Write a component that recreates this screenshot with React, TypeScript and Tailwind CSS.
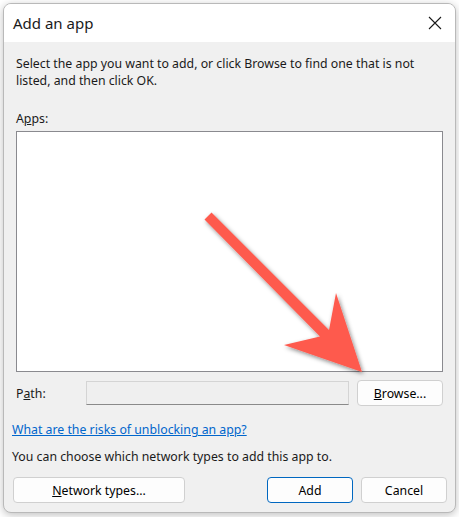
import React from 'react';

const font = { fontFamily: '"Noto Sans", "Open Sans", sans-serif' };

const Btn = ({ children, className = '' }: { children: React.ReactNode; className?: string }) => (
  <button
    className={`h-[26px] rounded-[4px] border bg-[#fdfdfd] text-[12.3px] text-black ${className}`}
  >
    {children}
  </button>
);

const Arrow = () => (
  <svg className="absolute left-0 top-0 pointer-events-none" width="459" height="517" viewBox="0 0 459 517">
    <defs>
      <filter id="sh" x="-20%" y="-20%" width="140%" height="140%">
        <feDropShadow dx="1.5" dy="2" stdDeviation="2" floodColor="#000" floodOpacity="0.45" />
      </filter>
    </defs>
    <polygon
      points="211.5,212.5 329,330 336,293 362,372 284,345 320,336.5 204.5,219.5"
      fill="#fe5a4e"
      filter="url(#sh)"
    />
  </svg>
);

export default function App() {
  return (
    <div className="relative w-[459px] h-[517px] bg-white overflow-hidden" style={font}>
      <div className="p-[3px]">
        <div className="w-[453px] h-[510px] rounded-[8px] border border-[#b9b9b9] bg-[#f0f0f0] overflow-hidden shadow-[0_2px_8px_rgba(0,0,0,0.25)] flex flex-col">
          {/* title bar */}
          <div className="h-[38px] bg-white flex items-center justify-between pl-[9px] pr-[12px] shrink-0">
            <span className="text-[15px] text-[#1a1a1a]">Add an app</span>
            <svg width="14" height="14" viewBox="0 0 14 14" className="mr-[1px]">
              <path d="M1 1L13 13M13 1L1 13" stroke="#1a1a1a" strokeWidth="1.1" />
            </svg>
          </div>

          <div className="flex flex-col text-[12.3px] leading-[17px] text-[#1a1a1a]">
            <p className="mt-[13px] ml-[12px]">
              Select the app you want to add, or click Browse to find one that is not
              <br />
              listed, and then click OK.
            </p>
            <p className="mt-[21px] ml-[12px]">
              A<span className="underline">p</span>ps:
            </p>
            <div className="mt-[4px] ml-[12px] w-[427px] h-[241px] bg-white border border-[#8a8a8f]" />

            <div className="mt-[8px] ml-[12px] flex items-center">
              <span className="w-[70px]">
                P<span className="underline">a</span>th:
              </span>
              <div className="w-[263px] h-[24px] bg-[#efefef] border border-[#d4d4d4] border-b-[#8a8a8a]" />
              <Btn className="ml-[8px] w-[86px] border-[#d0d0d0]">
                <span className="underline">B</span>rowse...
              </Btn>
            </div>

            <a className="mt-[15px] ml-[8px] text-[#0066cc] underline decoration-[#0066cc]">
              What are the risks of unblocking an app?
            </a>
            <p className="mt-[10px] ml-[8px]">You can choose which network types to add this app to.</p>

            <div className="mt-[12px] ml-[9px] mr-[8px] flex">
              <Btn className="w-[172px] border-[#d0d0d0]">
                <span className="underline">N</span>etwork types...
              </Btn>
              <div className="flex-1" />
              <Btn className="w-[86px] border-[#0067c0]">Add</Btn>
              <Btn className="ml-[8px] w-[86px] border-[#d0d0d0]">Cancel</Btn>
            </div>
          </div>
        </div>
      </div>
      <Arrow />
    </div>
  );
}
